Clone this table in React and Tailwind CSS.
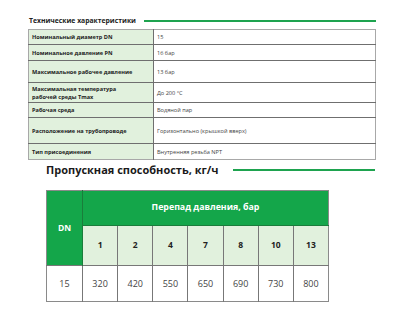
const specs = [
  ['Номинальный диаметр DN', '15', 'h-[15px]'],
  ['Номинальное давление PN', '16 бар', 'h-[16px]'],
  ['Максимальное рабочее давление', '13 бар', 'h-[22px]'],
  ['Максимальная температура\nрабочей среды Tmax', 'До 200 °C', 'h-[20px]'],
  ['Рабочая среда', 'Водяной пар', 'h-[15px]'],
  ['Расположение на трубопроводе', 'Горизонтально (крышкой вверх)', 'h-[26px]'],
  ['Тип присоединения', 'Внутренняя резьба NPT', 'h-[16px]'],
];

const pressures = ['1', '2', '4', '7', '8', '10', '13'];
const flows = ['320', '420', '550', '650', '690', '730', '800'];

export default function App() {
  return (
    <div className="w-[400px] h-[321px] bg-white overflow-hidden font-['Open_Sans',sans-serif]">
      <div className="pt-[16px] pl-[29px] pr-[24px] flex items-center">
        <span className="text-[6.8px] leading-[9px] font-bold text-[#222]">Технические характеристики</span>
        <div className="ml-[8px] flex-1 h-[2px] bg-[#1ea34f]" />
      </div>

      <table className="ml-[28px] mt-[4px] w-[348px] border-collapse border border-[#a8a8a8] table-fixed">
        <colgroup>
          <col className="w-[125px]" />
          <col />
        </colgroup>
        <tbody>
          {specs.map(([k, v, h]) => (
            <tr key={k} className={`${h} border-b border-[#6f6f6f] last:border-b-0`}>
              <td className="bg-[#e1f1dd] border-r border-[#6f6f6f] pl-[3px] p-0 text-[5.6px] leading-[8px] font-bold text-[#222] whitespace-pre-line align-middle">
                {k}
              </td>
              <td className="pl-[3px] p-0 text-[5.6px] leading-[8px] text-[#444] align-middle">{v}</td>
            </tr>
          ))}
        </tbody>
      </table>

      <div className="mt-[3px] pl-[46px] flex items-center w-[329px] box-content">
        <span className="text-[11px] leading-[14px] font-bold text-[#1a1a1a] whitespace-nowrap">
          Пропускная способность, кг/ч
        </span>
        <div className="ml-[14px] flex-1 h-[2px] bg-[#1ea34f]" />
      </div>

      <table className="ml-[46px] mt-[13px] w-[283px] border-collapse table-fixed border border-[#8a8a8a]">
        <colgroup>
          <col className="w-[36px]" />
          {pressures.map((p) => (
            <col key={p} />
          ))}
        </colgroup>
        <tbody>
          <tr className="h-[35px]">
            <td
              rowSpan={2}
              className="bg-[#14a64a] text-white text-[8.5px] font-bold text-center align-middle border-r border-[#1a7d3b] p-0"
            >
              DN
            </td>
            <td
              colSpan={7}
              className="bg-[#14a64a] text-white text-[8.8px] font-bold text-center align-middle border-b border-[#1a7d3b] p-0"
            >
              Перепад давления, бар
            </td>
          </tr>
          <tr className="h-[40px]">
            {pressures.map((p) => (
              <td
                key={p}
                className="bg-[#e1f1dd] text-[#222] text-[8.5px] font-bold text-center align-middle border-r border-[#777] last:border-r-0 p-0"
              >
                {p}
              </td>
            ))}
          </tr>
          <tr className="h-[36px] border-t border-[#777]">
            <td className="text-[#444] text-[9px] text-center align-middle border-r border-[#777] p-0">15</td>
            {flows.map((f) => (
              <td
                key={f}
                className="text-[#444] text-[9px] text-center align-middle border-r border-[#777] last:border-r-0 p-0"
              >
                {f}
              </td>
            ))}
          </tr>
        </tbody>
      </table>
    </div>
  );
}
